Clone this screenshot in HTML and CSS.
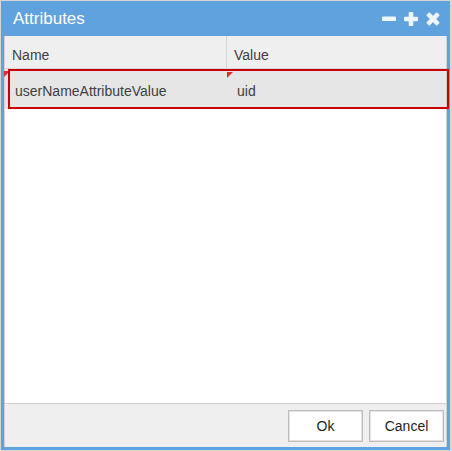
FILE: index.html
```html
<!DOCTYPE html>
<html>
<head>
<meta charset="utf-8">
<link rel="stylesheet" href="styles.css">
</head>
<body>
<div class="dialog">
  <div class="header">
    <span class="title">Attributes</span>
    <div class="tools">
      <svg class="tool" width="14" height="14" viewBox="0 0 14 14"><rect x="0" y="4.5" width="14" height="4.5" rx="0.8"/></svg>
      <svg class="tool" width="14" height="14" viewBox="0 0 14 14"><rect x="0" y="4.7" width="14" height="4.6" rx="0.8"/><rect x="4.7" y="0" width="4.6" height="14" rx="0.8"/></svg>
      <svg class="tool" width="14" height="14" viewBox="0 0 14 14"><g transform="rotate(45 7 7)"><rect x="-0.5" y="4.8" width="15" height="4.4" rx="1"/><rect x="4.8" y="-0.5" width="4.4" height="15" rx="1"/></g></svg>
    </div>
  </div>
  <div class="body">
    <div class="grid">
      <div class="grid-head">
        <div class="hcell c1">Name</div>
        <div class="hcell c2">Value</div>
      </div>
      <div class="grid-body">
        <div class="row">
          <div class="cell c1 dirty">userNameAttributeValue</div>
          <div class="cell c2 dirty">uid</div>
        </div>
      </div>
    </div>
    <div class="toolbar">
      <button class="btn">Ok</button>
      <button class="btn">Cancel</button>
    </div>
  </div>
  <div class="highlight"></div>
</div>
</body>
</html>
```

FILE: styles.css
```css
html, body {
  margin: 0;
  padding: 0;
}
body {
  background: #d6d6d6;
  width: 452px;
  height: 451px;
  overflow: hidden;
  font-family: "Liberation Sans", Arial, sans-serif;
}
.dialog {
  position: relative;
  margin: 1px 0 0 1px;
  width: 449px;
  height: 449px;
  box-sizing: border-box;
  background: #5fa2dd;
  padding: 0 3px 3px 3px;
  display: flex;
  flex-direction: column;
}
.header {
  height: 35px;
  flex: none;
  display: flex;
  align-items: center;
  justify-content: space-between;
  padding: 0 7px 0 9px;
}
.title {
  color: #ffffff;
  font-size: 17px;
  line-height: 20px;
}
.tools {
  display: flex;
  gap: 8px;
  align-items: center;
  margin-top: 1px;
}
.tool {
  fill: #eef5fb;
  display: block;
}
.body {
  flex: 1;
  background: #ffffff;
  border-left: 1px solid #d0d0d0;
  border-right: 1px solid #d0d0d0;
  display: flex;
  flex-direction: column;
  min-height: 0;
}
.grid {
  flex: 1;
  display: flex;
  flex-direction: column;
}
.grid-head {
  display: flex;
  height: 32px;
  background: #efefef;
  border-bottom: 1px solid #d6d6d6;
  color: #404040;
  font-size: 14px;
}
.hcell {
  padding: 11px 6px 0 7px;
  line-height: 16px;
  box-sizing: border-box;
}
.c1 {
  width: 222px;
  border-right: 1px solid #d4d4d4;
  flex: none;
}
.c2 {
  flex: 1;
}
.grid-body {
  flex: 1;
}
.row {
  display: flex;
  height: 40px;
  background: #e6e6e6;
  color: #404040;
  font-size: 14px;
}
.row .c1 {
  border-right-color: transparent;
}
.cell {
  position: relative;
  padding: 14px 10px 0 10px;
  line-height: 16px;
  box-sizing: border-box;
}
.dirty::before {
  content: "";
  position: absolute;
  left: 0;
  top: 3px;
  width: 0;
  height: 0;
  border-top: 6px solid #d9322b;
  border-right: 6px solid transparent;
}
.row .c1.dirty::before {
  left: -1px;
  top: 2px;
}
.toolbar {
  flex: none;
  height: 44px;
  background: #efefef;
  border-top: 1px solid #d0d0d0;
  display: flex;
  justify-content: flex-end;
  align-items: flex-start;
  gap: 6px;
  padding: 6px 2px 0 0;
  box-sizing: border-box;
}
.btn {
  width: 75px;
  height: 32px;
  background: #ffffff;
  border: 1px solid #bdbdbd;
  box-shadow: inset 0 0 0 1px #e2e2e2;
  border-radius: 0;
  font-family: "Liberation Sans", Arial, sans-serif;
  font-size: 14px;
  color: #1f1f1f;
  padding: 0;
  margin: 0;
}
.highlight {
  position: absolute;
  left: 7px;
  top: 68px;
  width: 441px;
  height: 40px;
  box-sizing: border-box;
  border: 2px solid #c80000;
  pointer-events: none;
}
```
